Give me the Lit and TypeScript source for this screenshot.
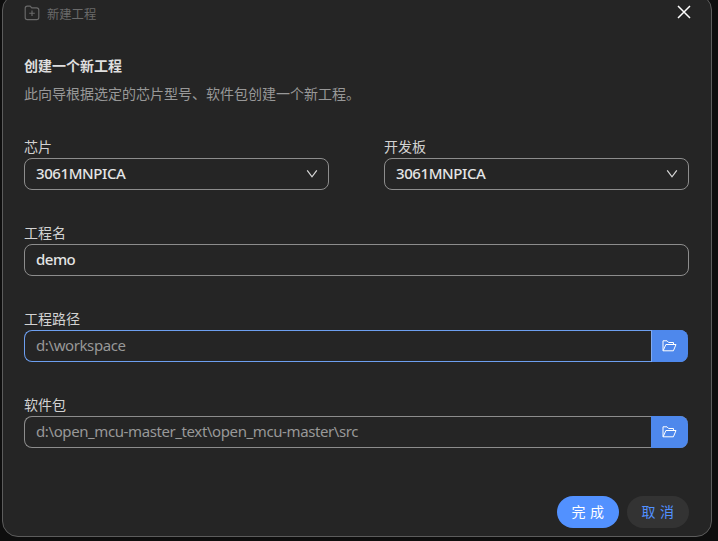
import { LitElement, html, css } from "lit";
import { customElement } from "lit/decorators.js";

const folderAdd = html`<svg class="i-add" width="16" height="16" viewBox="0 0 16 16" fill="none" stroke="currentColor" stroke-width="1.15">
  <path d="M1.2 3.2Q1.2 1.1 3.3 1.1H6.1L7.8 2.9H12.6Q14.8 2.9 14.8 5.1V12.4Q14.8 14.6 12.6 14.6H3.4Q1.2 14.6 1.2 12.4Z"/>
  <path d="M8 5.4V11M5.2 8.2H10.8"/></svg>`;
const close = html`<svg width="14" height="14" viewBox="0 0 14 14" fill="none" stroke="#fff" stroke-width="1.5"><path d="M1 1L13 13M13 1L1 13"/></svg>`;
const chevron = html`<svg width="12" height="12" viewBox="0 0 12 12" fill="none" stroke="#d8d8d8" stroke-width="1.2"><path d="M1.2 2.4L6 8.8L10.8 2.4"/></svg>`;
const folderOpen = html`<svg width="15" height="14" viewBox="0 0 15 14" fill="none" stroke="#fff" stroke-width="1"><path d="M11.5 5.5V3.5H6.6L5 1.8H1V11.8H11.4L14 5.5H3.9L1.2 11.6"/></svg>`;

@customElement("app-root")
export class AppRoot extends LitElement {
  static styles = css`
    :host { display: block; height: 541px; overflow: hidden; background: #0e0e0e;
      font: 14px/20px "Noto Sans", "Noto Sans CJK SC", sans-serif; color: #d2d2d2; }
    * { box-sizing: border-box; }
    svg { display: block; flex: none; }
    .dialog { width: 710px; height: 543px; margin: -6px 0 0 2px; padding: 9px 22px 8px 21px;
      background: #252525; border: 1px solid #5c5c5c; border-radius: 16px;
      display: flex; flex-direction: column; }
    .head { display: flex; align-items: center; height: 20px; color: #6a6a6a; font-size: 12.3px; flex: none; }
    .i-add { margin: -2px 7px 0 0; }
    .head span { margin-top: 2px; }
    .head .x { margin: -4px -2px 0 auto; }
    .title { font-weight: 700; margin-top: 32px; color: #dedede; }
    .desc { margin-top: 8px; color: #989898; }
    .row { display: flex; gap: 55px; margin-top: 33px; }
    .row > .field { flex: 1; margin: 0; }
    .field { margin-top: 33px; }
    .label { height: 20px; }
    .box { display: flex; align-items: center; height: 32px; margin-top: 1px; padding-left: 11px;
      border: 1px solid #8d8d8d; border-radius: 8px; color: #e4e4e4; font-size: 15px;
      font-weight: 500; letter-spacing: -.5px; }
    .box .v { flex: 1; margin-bottom: 2px; }
    .select { padding-right: 10px; }
    .box .chip { letter-spacing: -.4px; }
    .path { color: #989898; border-right: 0; margin-right: 1px; font-weight: 450; letter-spacing: -.4px; }
    .active { border-color: #6d9ff0; }
    .browse { width: 37px; height: 32px; margin: -1px 0; background: #4e88ec; border-radius: 0 8px 8px 0;
      display: flex; align-items: center; justify-content: center; flex: none; padding-right: 1px; }
    .active .browse { border-left: 1px solid #80aaf2; padding-right: 2px; }
    .foot { display: flex; justify-content: flex-end; gap: 8px; margin-top: auto; }
    .btn { width: 62px; height: 32px; border-radius: 16px; display: flex; align-items: center;
      justify-content: center; letter-spacing: 4.5px; padding-left: 4px; background: #333; color: #5291ff; }
    .primary { background: #5291ff; color: #fff; }
  `;

  private select(label: string, value: string) {
    return html`<div class="field"><div class="label">${label}</div>
      <div class="box select"><span class="v chip">${value}</span>${chevron}</div></div>`;
  }

  private path(label: string, value: string, active = false) {
    return html`<div class="field"><div class="label">${label}</div>
      <div class="box path ${active ? "active" : ""}"><span class="v">${value}</span><div class="browse">${folderOpen}</div></div></div>`;
  }

  render() {
    return html`<div class="dialog">
      <div class="head">${folderAdd}<span>新建工程</span><div class="x">${close}</div></div>
      <div class="title">创建一个新工程</div>
      <div class="desc">此向导根据选定的芯片型号、软件包创建一个新工程。</div>
      <div class="row">${this.select("芯片", "3061MNPICA")}${this.select("开发板", "3061MNPICA")}</div>
      <div class="field"><div class="label">工程名</div><div class="box"><span class="v">demo</span></div></div>
      ${this.path("工程路径", "d:\\workspace", true)}
      ${this.path("软件包", "d:\\open_mcu-master_text\\open_mcu-master\\src")}
      <div class="foot"><div class="btn primary">完成</div><div class="btn">取消</div></div>
    </div>`;
  }
}
